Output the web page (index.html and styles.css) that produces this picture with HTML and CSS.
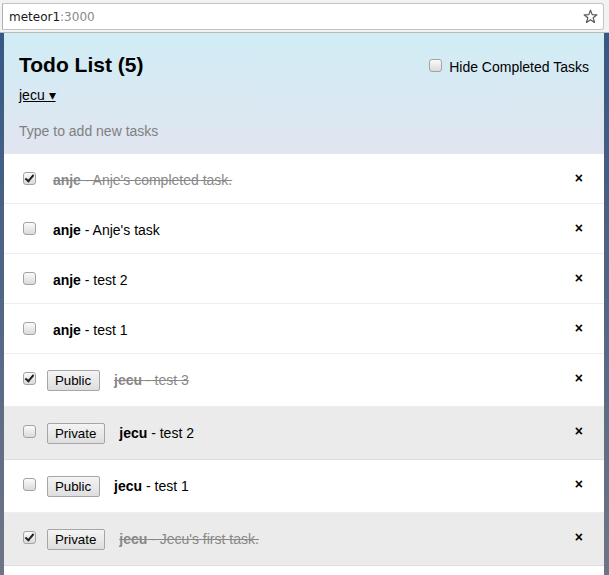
FILE: index.html
```html
<!DOCTYPE html>
<html>
<head>
<meta charset="utf-8">
<title>simple-todos</title>
<link rel="stylesheet" href="styles.css">
</head>
<body>
<div class="chrome">
  <div class="urlbar">
    <span class="host">meteor1</span><span class="port">:3000</span>
    <svg class="star" width="15" height="15" viewBox="0 0 15 15"><path d="M7.5 1.2 L9.2 5.6 L13.9 5.8 L10.2 8.8 L11.5 13.4 L7.5 10.8 L3.5 13.4 L4.8 8.8 L1.1 5.8 L5.8 5.6 Z" fill="none" stroke="#555" stroke-width="1.2" stroke-linejoin="round"/></svg>
  </div>
</div>
<div class="viewport">
  <div class="container">
    <header>
      <label class="hide-completed"><input type="checkbox" class="cb"> Hide Completed Tasks</label>
      <h1>Todo List (5)</h1>
      <div class="login"><a class="login-link">jecu ▾</a></div>
      <form class="new-task"><input type="text" placeholder="Type to add new tasks"></form>
    </header>
    <ul>
      <li class="checked"><button class="delete">×</button><input type="checkbox" class="cb" checked> <span class="text"><strong>anje</strong> - Anje's completed task.</span></li>
      <li><button class="delete">×</button><input type="checkbox" class="cb"> <span class="text"><strong>anje</strong> - Anje's task</span></li>
      <li><button class="delete">×</button><input type="checkbox" class="cb"> <span class="text"><strong>anje</strong> - test 2</span></li>
      <li><button class="delete">×</button><input type="checkbox" class="cb"> <span class="text"><strong>anje</strong> - test 1</span></li>
      <li class="checked"><button class="delete">×</button><input type="checkbox" class="cb" checked> <button class="toggle-private">Public</button> <span class="text"><strong>jecu</strong> - test 3</span></li>
      <li class="private"><button class="delete">×</button><input type="checkbox" class="cb"> <button class="toggle-private">Private</button> <span class="text"><strong>jecu</strong> - test 2</span></li>
      <li><button class="delete">×</button><input type="checkbox" class="cb"> <button class="toggle-private">Public</button> <span class="text"><strong>jecu</strong> - test 1</span></li>
      <li class="checked private"><button class="delete">×</button><input type="checkbox" class="cb" checked> <button class="toggle-private">Private</button> <span class="text"><strong>jecu</strong> - Jecu's first task.</span></li>
    </ul>
  </div>
</div>
</body>
</html>
```
FILE: styles.css
```css
html, body {
  margin: 0;
  padding: 0;
  height: 100%;
}
body {
  display: flex;
  flex-direction: column;
  font-family: "Liberation Sans", Arial, sans-serif;
  font-size: 14px;
  overflow: hidden;
}
.chrome {
  flex: none;
  background: #f2f2f2;
  border-bottom: 1px solid #b9b9b9;
  padding: 3px 5px 0 2px;
  box-sizing: border-box;
  height: 33px;
}
.urlbar {
  height: 27px;
  box-sizing: border-box;
  background: #fff;
  border: 1px solid #c4c4c4;
  border-left-color: #b0b0b0;
  border-radius: 0 3px 3px 0;
  display: flex;
  align-items: center;
  padding: 0 5px 0 6px;
  font-family: "DejaVu Sans", sans-serif;
  font-size: 12px;
}
.host { color: #1a1a1a; }
.port { color: #8a8a8a; flex: 1; }
.star { display: block; }
.viewport {
  flex: 1;
  background: linear-gradient(to bottom, #365884, #6f7586);
  padding: 0 5px 0 4px;
  display: flex;
}
.container {
  width: 600px;
  background: #fff;
}
header {
  background: #d2edf4;
  background-image: linear-gradient(to bottom, #d0edf5, #e1e5f0 100%);
  padding: 20px 15px 15px 15px;
}
h1 {
  font-size: 1.5em;
  margin: 0 1em 10px 0;
  display: inline-block;
}
.hide-completed {
  float: right;
  margin-top: 3px;
}
.login {
  display: block;
}
.login-link {
  color: #000;
  text-decoration: underline;
  cursor: pointer;
}
.new-task {
  margin: 10px 0 -10px 0;
}
.new-task input {
  box-sizing: border-box;
  padding: 10px 80px 10px 0;
  background: transparent;
  border: none;
  width: 100%;
  font-size: 1em;
  font-family: "Liberation Sans", Arial, sans-serif;
  outline: 0;
}
.new-task input::placeholder {
  color: #808080;
}
ul {
  margin: 0;
  padding: 0;
  background: #fff;
}
li {
  list-style: none;
  padding: 15px;
  border-bottom: 1px solid #eee;
}
li.private {
  background: #ebebeb;
  border-color: #ddd;
}
li.checked {
  color: #888;
}
li.checked .text {
  text-decoration: line-through;
}
.text {
  margin-left: 10px;
}
.delete {
  float: right;
  font-weight: bold;
  background: none;
  border: none;
  font-size: 1em;
  font-family: "Liberation Sans", Arial, sans-serif;
  padding: 1px 6px;
  color: #000;
}
.toggle-private {
  margin-left: 4px;
  font-family: "Liberation Sans", Arial, sans-serif;
  font-size: 13.333px;
  line-height: 15px;
  padding: 2px 8px 2px 7px;
  color: #000;
  border: 1px solid #a6a6a6;
  border-radius: 2px;
  background: linear-gradient(to bottom, #f4f4f4, #dedede);
}
.cb {
  appearance: none;
  -webkit-appearance: none;
  width: 13px;
  height: 13px;
  margin: 3px 3px 0 4px;
  box-sizing: border-box;
  border: 1px solid #a3a3a3;
  border-radius: 3px;
  background: linear-gradient(to bottom, #fbfbfb, #dadada);
  position: relative;
  vertical-align: baseline;
}
.cb:checked::after {
  content: "";
  position: absolute;
  left: 3px;
  top: 0px;
  width: 3px;
  height: 7px;
  border: solid #222;
  border-width: 0 2px 2px 0;
  transform: rotate(40deg);
}
```
